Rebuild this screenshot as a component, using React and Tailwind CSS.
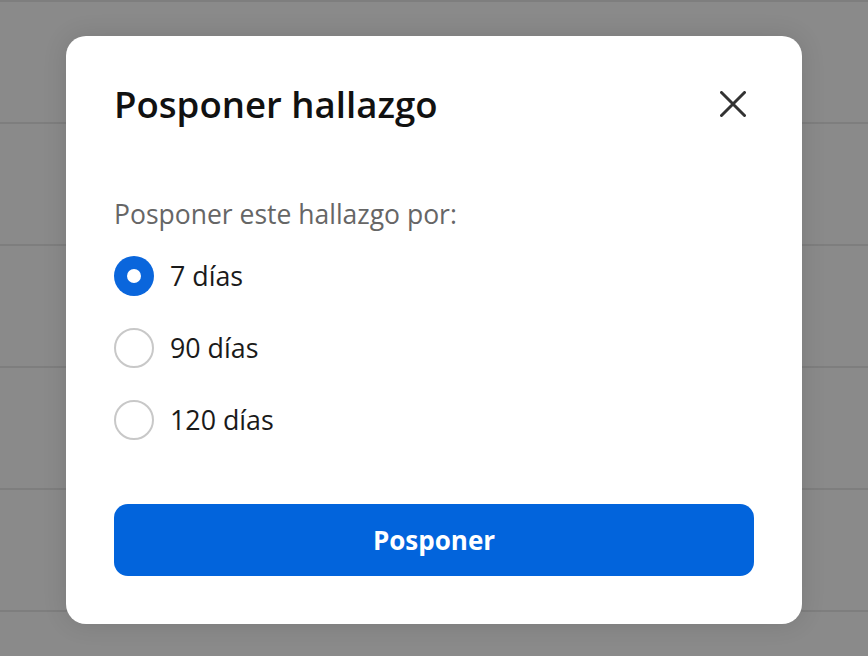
const OPTIONS = [
  { label: '7 días', checked: true },
  { label: '90 días', checked: false },
  { label: '120 días', checked: false },
]

function Radio({ checked }) {
  return checked ? (
    <span className="flex h-10 w-10 shrink-0 items-center justify-center rounded-full bg-[#0a66dc]">
      <span className="h-[14px] w-[14px] rounded-full bg-white" />
    </span>
  ) : (
    <span className="h-10 w-10 shrink-0 rounded-full border-2 border-[#c8c8c8] bg-white" />
  )
}

export default function App() {
  return (
    <div
      className="relative h-[656px] w-[868px] overflow-hidden bg-[#8a8a8a]"
      style={{ fontFamily: '"Open Sans", "Noto Sans", sans-serif' }}
    >
      {/* dimmed page behind the dialog */}
      <div className="flex flex-col border-t-2 border-[#7e7e7e]">
        {[0, 1, 2, 3, 4, 5].map((i) => (
          <div key={i} className="h-[122px] border-b-2 border-[#7e7e7e]" />
        ))}
      </div>

      <div className="absolute left-[66px] top-[36px] flex h-[588px] w-[736px] flex-col rounded-[20px] bg-white px-12 pt-[46px] shadow-[0_0_24px_rgba(0,0,0,0.12)]">
        <div className="flex items-center justify-between">
          <h2 className="text-[36.6px] font-semibold leading-[44px] text-[#111]">Posponer hallazgo</h2>
          <button type="button" className="mr-[7px] flex h-[28px] w-[28px] items-center justify-center">
            <svg width="26" height="26" viewBox="0 0 26 26" fill="none" stroke="#333" strokeWidth="3" strokeLinecap="round">
              <path d="M1.5 1.5 24.5 24.5M24.5 1.5 1.5 24.5" />
            </svg>
          </button>
        </div>

        <p className="mt-[72px] text-[26.5px] leading-[32px] text-[#666]">Posponer este hallazgo por:</p>

        <div className="mt-[26px] flex flex-col gap-[32px]">
          {OPTIONS.map((o) => (
            <label key={o.label} className="flex items-center gap-4">
              <Radio checked={o.checked} />
              <span className="text-[26.8px] leading-[32px] text-[#1a1a1a]">{o.label}</span>
            </label>
          ))}
        </div>

        <button
          type="button"
          className="mt-[64px] h-[72px] w-full rounded-[14px] bg-[#0264dc] text-[26px] font-bold text-white"
        >
          Posponer
        </button>
      </div>
    </div>
  )
}
